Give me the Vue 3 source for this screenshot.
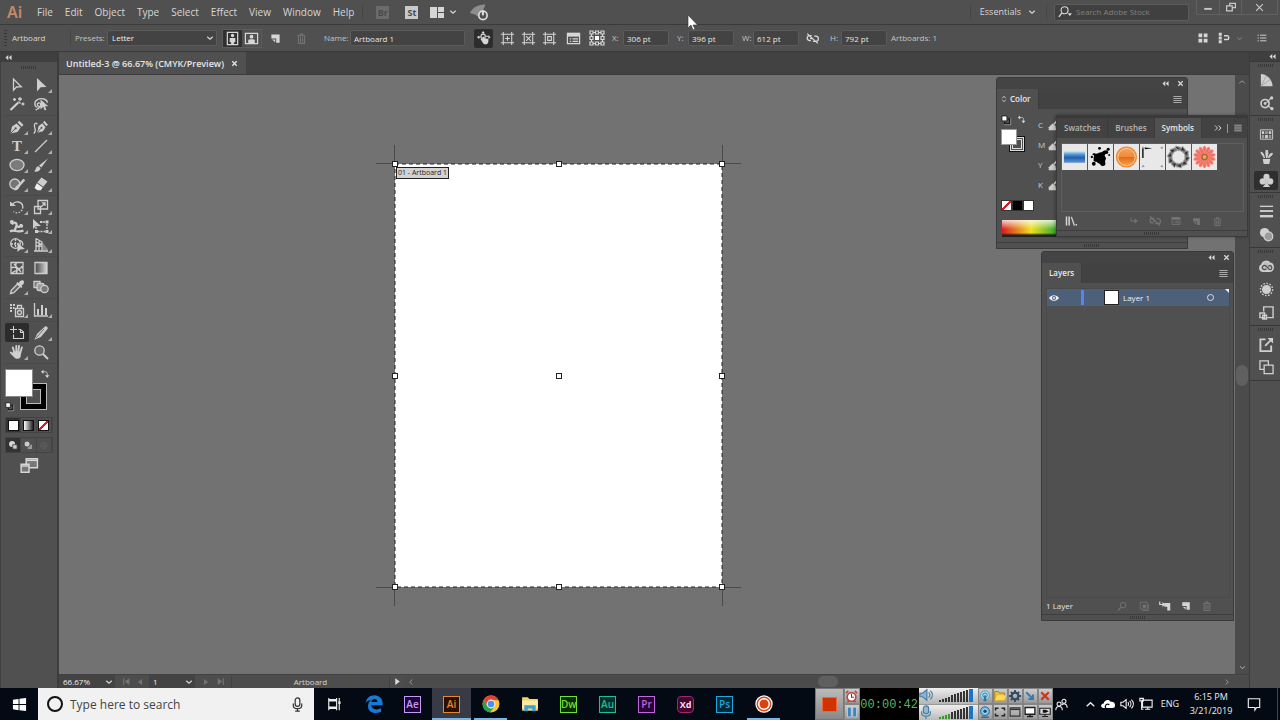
<script setup>
import { h } from 'vue'

const F = 'fill="currentColor" stroke="none"'
const nib = `<path ${F} d="M1.5 14.5 3 7.6 7.6 4.6l4 4L8.500 13z"/><path ${F} d="m8.600 3.600 1.700-1.800 4.200 4.200-1.800 1.700z"/><path stroke="#505050" stroke-width="1" d="m1.500 14.500 4.500-4.700"/><circle cx="6.700" cy="9.300" r="1.100" fill="#505050" stroke="none"/>`
const trash = `<path d="M3 4.500h10M6.500 4V2.500h3V4M4.200 5v9h7.600V5M6.700 6.500v6M9.300 6.500v6"/>`
const page = `<path ${F} d="M2 2h12v12H9V8H2z"/><path ${F} d="M3 9.500h4.500v4z"/>`
const icons = {
  select: `<path d="M4.500 2v11.200l3-3.200 4.700-.3z"/>`,
  direct: `<path ${F} d="M4 1v13.500l3.700-4.200 5.800-.4z"/>`,
  wand: `<path stroke-width="2.200" d="m1.500 14 7.800-7.500"/><path d="M11 1v4M9 3h4M14 6.500v3M12.500 8h3M5.500 2v3M4 3.500h3"/><path d="m9.500 5.500 2 2"/>`,
  lasso: `<path d="M4.500 11.500C1 10 .8 5.500 4.500 3.600c4-2 9.500-.6 10 3"/><path d="M6.500 10.500c-2.500 0-3-3-1-3.500s3 2 1.500 4-3 2-4.500 3"/><path ${F} d="M7.500 3.500v10l2.700-2.700 1.500 3.700 1.700-.7-1.500-3.500h3.400z"/>`,
  pen: nib,
  curve: `<g transform="translate(3 0) scale(.82 .95)">${nib}</g><path d="M.8 14.500C4.500 11 .5 8.500 1.500 5.500c.7-2 2.500-1.500 2.500 0"/>`,
  type: `<text x="8" y="13" text-anchor="middle" font-family="Liberation Serif, serif" font-weight="700" font-size="15" ${F}>T</text>`,
  line: `<path d="M2 14 14 2"/>`,
  ellipse: `<ellipse cx="8" cy="8" rx="7" ry="5.600" fill="#7b7b7b"/>`,
  brush: `<path ${F} d="M15 1.500 8.300 10.500 6 8.500z"/><path ${F} d="M5.400 9.200 7.600 11.200C7 14.300 4 15 1 14.500c2-1.200 1.500-4.800 4.400-5.300z"/>`,
  blob: `<circle cx="5.800" cy="8" r="5" fill="#747474"/><path stroke-width="2.600" d="M15.300 3.500 9 10.500"/><path ${F} d="m7.800 9.500 2.300 2.200c-1.600 2.500-3 2.800-5.400 2.500 1.500-1 1.400-3.700 3.100-4.700z"/>`,
  eraser: `<path ${F} d="m8.500 1.500 6 4-4.200 5.300-6-4.200z"/><path fill="#eee" stroke="none" d="m3.800 7.300 6 4.200-2 2.700H4.500L1.500 12z"/>`,
  rotate: `<path d="M3.500 5.500C6 1.300 13.500 2.200 13.800 8"/><path stroke-dasharray="1.500 1.500" d="M13.800 8c0 5-5.500 7.500-9.300 4.500"/><path ${F} d="M1 2.500 7 7H1z"/>`,
  scale: `<path d="M5 1.500h9.500V10H5zM1.500 7.500h6v7h-6zM8 8l4-4M8.800 3.800H12V7"/>`,
  warp: `<path stroke-width="2.200" d="M1 13.500c4-3 7 2 13.500-1M3 6.500c2-3 5-2 4.500 1S5 11 7 12M8 8c2 2 4 0 4-2"/><circle cx="2.800" cy="4" r="2" ${F}/><circle cx="12.500" cy="8" r="1.700" ${F}/>`,
  free: `<path stroke-dasharray="2 1" d="M7 4h7v9.500H3V9"/><path ${F} d="M0 1v10l2.800-2.700L8 8zM12.500 2.500h3v3h-3zM12.500 12h3v3h-3zM2 12h3v3H2zM7 3h2.500v2H7z"/>`,
  builder: `<circle cx="6.500" cy="6.500" r="4.800"/><path stroke-dasharray="2 1" d="M2 7h9M6.500 2v9"/><path d="M10 3.500c3 0 4.500 2.500 3.500 5"/><path ${F} d="M8.500 6v9l2.700-2.500 4.800-.5z"/>`,
  perspective: `<path d="M3 1.500v12.500M3 1.500 9 5v9M1 14h14M3 5l6 2.500M3 9h6M6 3v11"/><path fill="#888" stroke="none" d="m10 6 5.500 7H10z"/>`,
  mesh: `<path d="M2 2.500h12v11H2zM2 8c4-3 6 3 12-1M7.500 2.500c-3 4 3 7-.5 11M3 13c3-3 8-2 10-7M5 4l7 8"/>`,
  gradient: `<defs><linearGradient id="tg"><stop stop-color="#444"/><stop offset="1" stop-color="#d8d8d8"/></linearGradient></defs><path fill="url(#tg)" d="M2 2.500h12v11H2z"/>`,
  dropper: `<path fill="#666" d="m1.500 14.500.8-3.200L8.500 5l2.600 2.500-6.300 6.200z"/><path ${F} d="m7.300 4.300 1.200-1.200 1.200.9c1-2 3-3.500 4.800-2.200 1.600 1.700-.2 3.800-2 4.900l1 1.200-1.200 1.200z"/>`,
  blend: `<path d="M1 2.500h6v6H1z" fill="#777"/><rect x="4" y="4.500" width="7" height="7" rx="2" fill="#999"/><circle cx="11.500" cy="10" r="3.700" fill="#777"/>`,
  spray: `<path d="M6.500 6.500h8v8h-8zM8.500 6V3.500h4V6"/><circle cx="10.500" cy="10.500" r="2"/><path ${F} d="M1 2h2v2H1zM4 2h2v2H4zM1 5h2v2H1zM4 5h1.500v2H4zM1 8h2v2H1z"/>`,
  graph: `<path d="M1.500 1v13H15"/><path ${F} d="M4 7h2v6H4zM8 3h2v10H8zM12 6h2v7h-2z"/>`,
  artboard: `<path stroke-width="1.100" d="M4.500 1v7M1 4.500h7M4.500 9.500v4h10V7L11.500 4.500H9.500"/><path stroke-width="1.100" d="M11.500 5v2.500h3"/>`,
  slice: `<path ${F} d="m1.500 14.800 2.600-6L12 1.600c1.500-1 3.500 1 2.500 2.500l-6.700 8z"/><path stroke="#505050" stroke-width=".8" d="m3 13 8-9"/>`,
  hand: `<path stroke-width="1.900" stroke-linecap="round" d="M5.500 9 3.800 3.500M7.300 8V2M9.300 8l.7-6M11.300 8.500l1.600-5M5.500 12 1.800 8.500"/><path ${F} d="M4.500 7.500h7.800l-.6 5c-.8 3-5 3-6.500.7L2.500 10z"/>`,
  zoom: `<circle cx="6.500" cy="6.500" r="4.700" fill="#666"/><path stroke-width="2" d="m10 10 5 5"/>`,
  swap: `<path d="M5 4.500h3.500c2 0 3 1 3 3V11"/><path ${F} d="M5.500 1v7L1.500 4.500zM8 10h7l-3.500 4.500z"/>`,
  defaults: `<path fill="#fff" stroke="#111" d="M1.500 1.500h8v8h-8z"/><path stroke="#111" stroke-width="2" d="M11 6h3v8H6v-3"/><path stroke="#ddd" stroke-width=".8" d="M15.500 5v10.500H5"/>`,
  screens: `<path fill="#777" d="M5.500 1.500h10v8h-10z"/><path d="M5.500 3h10"/><path fill="#777" d="M1 6.500h7v7H1z"/><path d="M1 8h7"/>`,
  drawn: `<circle cx="6.500" cy="6.500" r="4.800" ${F}/><path fill="#ccc" stroke="#444" d="M7.500 7.500h7v7h-7z"/>`,
  behind: `<path fill="#999" stroke="none" d="M7.500 7.500h7v7h-7z"/><circle cx="6.500" cy="6.500" r="4.800" fill="#ccc" stroke="#444"/>`,
  inside: `<circle cx="8" cy="8" r="5.500"/><circle cx="8.500" cy="8.500" r="2"/>`,
  down: `<path stroke-width="2.400" d="m2.500 5.500 5.500 5 5.500-5"/>`,
  up: `<path stroke-width="2" d="m2.500 10.500 5.500-5 5.500 5"/>`,
  left: `<path stroke-width="2" d="M10.500 3 5.500 8l5 5"/>`,
  right: `<path stroke-width="2" d="m5.500 3 5 5-5 5"/>`,
  collapse: `<path ${F} d="M7.500 2v12L1 8zM15 2v12L8.500 8z"/>`,
  more: `<path stroke-width="2" d="m2 3 5 5-5 5M9 3l5 5-5 5"/>`,
  close: `<path stroke-width="3" d="m3 3 10 10M13 3 3 13"/>`,
  menu: `<path stroke-width="1.500" d="M2 3.500h12M2 6.500h12M2 9.500h12M2 12.500h12"/>`,
  layout: `<path ${F} d="M1 3h7v11H1zM9 3h6v5H9zM9 9h6v5H9z"/>`,
  rocket: `<path fill="#8d8d8d" stroke="none" d="M0 9C2 4 6 2 13.500 1 13 4 12 6 10 7.500L7 12l-3-2z"/><circle cx="11.500" cy="11" r="3.700" fill="#505050" stroke="#ddd" stroke-width="1.500"/><path stroke="#ddd" stroke-width="1.800" d="M11.500 6.500V11"/>`,
  search: `<circle cx="7.500" cy="6" r="4"/><path stroke-width="1.600" d="M4.500 9 1 13.500"/><path ${F} d="M11 9.500h5L13.500 12.500z"/>`,
  portrait: `<path d="M2.500 1.500h11v13h-11z"/><circle cx="8" cy="4.800" r="1.800" ${F}/><path ${F} d="M5 7.500h6V12H9.500v2h-3v-2H5z"/>`,
  landscape: `<path d="M1.500 2.500h13v11h-13z"/><circle cx="8" cy="6" r="2" ${F}/><path ${F} d="M4.500 13V9.500c0-1 7-1 7 0V13z"/>`,
  page, trash,
  move: `<circle cx="7" cy="6" r="2.500"/><path d="M7 1v2M1 7h3M10 6h4"/><path ${F} d="m7 0 2 2.500H5zM0 7l2.500-2v4zM15.500 7 13 5v4zM7 14l-3-5 1.200-.7 1.300 1.200V6.500H8V8l5 1v3.500L11.500 15H8z"/>`,
  abadd: `<path stroke-width="1.100" d="M3.500 1v14M12.500 1v14M1 3.500h14M1 12.500h14M8 5.500v5M5.500 8h5"/>`,
  abcross: `<path stroke-width="1.100" d="M3.500 1v14M12.500 1v14M1 3.500h14M1 12.500h14M5.500 5.500l5 5M10.500 5.500l-5 5"/>`,
  abbox: `<path stroke-width="1.100" d="M3.500 1v14M12.500 1v14M1 3.500h14M1 12.500h14M6 6h4v4H6z"/>`,
  options: `<path d="M1.500 2.500h13v11h-13z"/><path ${F} d="M1.500 2h13v4h-13z"/><path d="M4 8.500h1.500M7 8.500h6M4 11h1.500M7 11h6"/>`,
  refpoint: `<path stroke-width="1.200" d="M1 1h3v3H1zM6.500 1h3v3h-3zM12 1h3v3h-3zM1 6.500h3v3H1zM12 6.500h3v3h-3zM1 12h3v3H1zM6.500 12h3v3h-3zM12 12h3v3h-3zM4 2.500h2M10 2.500h2M4 13.500h2M10 13.500h2M2.500 4v2M2.500 10v2M13.500 4v2M13.500 10v2"/><path fill="#fff" stroke="none" d="M6 6h4v4H6z"/>`,
  unlink: `<path stroke-width="1.600" d="M7 4.500H4.500a3 3 0 0 0 0 6H6M10 5h2a3 3 0 0 1 0 6.500H8.500M5 8h3M1.500 2l13 12"/>`,
  grid: `<path ${F} d="M2 2h5v5H2zM9 2h5v5H9zM2 9h5v5H2zM9 9h5v5H9z"/>`,
  snap: `<path ${F} d="M1 1h4v4H1zM1 6h4v4H1zM1 11h4v4H1z"/><path stroke-width="2" d="M8 5h4.500c2.500 0 2.500 5 0 5H8"/>`,
  list: `<path stroke-width="1.500" d="M1 3.500h2M5 3.500h10M1 8h2M5 8h10M1 12.500h2M5 12.500h10"/>`,
  min: `<path stroke-width="3" d="M2 11h12"/>`,
  restore: `<path stroke-width="2" d="M6 5V2h9v7h-4M1 6h9v8H1z"/>`,
  x: `<path stroke-width="2" d="m2 2 12 12M14 2 2 14"/>`,
  quarter: `<path ${F} d="M2 1c7 .5 12 6 12.500 13H2z"/><path stroke="#999" stroke-width=".8" d="M2 14 12 7M2 14 8 3"/>`,
  nodes: `<circle cx="6.500" cy="8" r="4.300" stroke-width="1.800"/><circle cx="6.500" cy="8" r="1.500" ${F}/><path d="m8 7 5-5M9 10l5 4"/><circle cx="13.500" cy="2" r="1.700" ${F}/><circle cx="13.800" cy="13.500" r="1.700" ${F}/>`,
  swatches: `<path stroke-width="1" d="M1.500 3h13v10h-13z"/><path ${F} d="M3 4.500h2.500v3H3zM10.500 4.500H13v3h-2.500zM6.500 8.500h3V12h-3z"/><path fill="#999" stroke="none" d="M6.500 4.500h3v3h-3zM3 8.500h2.500V12H3zM10.500 8.500H13V12h-2.500z"/>`,
  brushes: `<path ${F} d="M4 9.500h8L11 15H5zM1.500 2C4 1.500 5.500 4 6.500 8.500H5C4.500 6 2 5 1.500 2zM7 0h2.500l.5 4-1 4.500H7.500L6.800 4zM14.500 3c1 3-2 3-3.500 5.500H9.500C10.500 5 12 3 14.500 3z"/>`,
  club: `<circle cx="8" cy="4.200" r="3.300" ${F}/><circle cx="4" cy="9" r="3.300" ${F}/><circle cx="12" cy="9" r="3.300" ${F}/><path ${F} d="M7 6h2l.5 6 2.500 3H4l2.500-3z"/>`,
  stroke: `<path stroke-width="1.500" d="M1 2.500h14"/><path stroke-width="2" d="M1 7.500h14"/><path stroke-width="2.600" d="M1 13h14"/>`,
  opacity: `<circle cx="6" cy="6" r="5" ${F}/><circle cx="10" cy="10" r="4.700" fill="#9b9b9b"/>`,
  cloud: `<path fill="#bdbdbd" stroke-width="1.700" d="M4.500 13C0 13 0 7.500 3 6.500 4 2 9.500 1.500 11.500 4.500c4.500 0 5 8 0 8.500z"/><path stroke="#505050" stroke-width="1.300" d="M8 10.500C6 12 3.500 11 3.500 9s2.500-3 4.500-1l3 3c2 1 3-1 2.500-2.500S11 6.500 10 8"/>`,
  sun: `<circle cx="8" cy="8" r="4.800" ${F}/><circle cx="8" cy="8" r="6.500" stroke-dasharray="1.700 1.600" stroke-width="1.500"/>`,
  styles: `<path stroke-width="1.500" d="M5 7V2h10v11.500H9M1 8.500h5v5H1zM4 11h4v4H4z"/>`,
  export: `<path stroke-width="2" d="M7 2.500H1.500V15H13V9"/><path stroke-width="2" d="m6.500 9.500 7-7"/><path ${F} d="M9 1h6v6z"/>`,
  artboards: `<path stroke-width="1.400" d="M5 10H1V1h9v4M5.500 5.500H15v9H5.500z"/>`,
  library: `<path stroke-width="2" d="M2 2v12M5.500 2v12"/><path stroke-width="1.700" d="m8.500 2.500 4 11.500"/><path ${F} d="M14 12h2v2h-2z"/>`,
  place: `<path stroke-width="1.600" d="M3 3v5h7"/><path ${F} d="M9 4v8l5-4z"/>`,
  eye: `<path ${F} d="M0 8c4-6 12-6 16 0-4 6-12 6-16 0z"/><circle cx="8" cy="8" r="3.200" fill="#4c6079" stroke="none"/><circle cx="8" cy="8" r="1.600" ${F}/>`,
  find: `<circle cx="9" cy="6" r="4"/><path stroke-width="1.800" d="m6 9-4.500 5"/>`,
  mask: `<path d="M2 2h11v11H2z"/><path ${F} d="M6 6h5v5H6z"/><path d="M5 15h10V5"/>`,
  sub: `<path ${F} d="M7 4h8v10h-4V9H7z"/><path stroke-width="1.600" d="M1 2v4h6M4.500 3.500 7 6 4.500 8.500"/>`,
  ink: `<path fill="#ccc" stroke="none" d="M1 15v-4l5-5 4 3 1 6z"/><path stroke="#ddd" stroke-width="2" d="m8 7 4-5"/>`,
  first: `<path stroke-width="2" d="M3 2v12"/><path ${F} d="M13 2v12L5 8z"/>`,
  prev: `<path ${F} d="M12 2v12L4 8z"/>`,
  next: `<path ${F} d="M4 2v12l8-6z"/>`,
  last: `<path stroke-width="2" d="M13 2v12"/><path ${F} d="M3 2v12l8-6z"/>`,
  windows: `<path ${F} d="m1 3 6-1v5.500H1zM8 1.800 15 1v6.500H8zM1 8.500h6V14l-6-1zM8 8.500h7V15l-7-.9z"/>`,
  mic: `<rect x="5.500" y="1" width="5" height="9" rx="2.500"/><path d="M3.500 7v2c0 4.500 9 4.500 9 0V7M8 12.500V15M5.500 15h5"/>`,
  taskview: `<path stroke-width="1.300" d="M2 4.500h9v7H2zM2 1v2h9V1M2 15v-2h9v2M14 1v14"/><path ${F} d="M13 5h2.500v3H13z"/>`,
  edge: `<path fill="#1679d3" stroke="none" d="M.5 7.200C1.300 2.700 4.500.3 8.300.3c4.600 0 7.400 3.200 7.400 7.300v1.600H5.600c.2 4 5.200 4.600 8.700 2.300v3.300c-5.400 2.700-12 .8-11.600-5.300.1-2.500 1.400-4.200 3.300-5C3.700 4.600 1.800 5.500.5 7.200zM5.700 6.300h5.400c0-3.600-5-3.500-5.400 0z"/>`,
  chrome: `<circle cx="8" cy="8" r="7.500" fill="#fbc52d" stroke="none"/><path fill="#df4436" stroke="none" d="M1.500 4.200A7.500 7.500 0 0 1 14.700 4.600L8 4.500 4.800 9.500z"/><path fill="#2b9e50" stroke="none" d="M1.500 4.200A7.500 7.500 0 0 0 7.300 15.500L11 10H5z"/><circle cx="8" cy="8" r="3.400" fill="#4c8df5" stroke="#eee" stroke-width="1"/>`,
  folder: `<path fill="#f3d36b" stroke="none" d="M1 2h5l1.500 1.500H15V14H1z"/><path fill="#ffe9a0" stroke="none" d="M1 5h14v7H1z"/><path fill="#36a0da" stroke="none" d="M3 14.500V9h10v5.500h-3V12H6v2.500z"/>`,
  record: `<circle cx="8" cy="8" r="7.700" fill="#fff" stroke="none"/><circle cx="8" cy="8" r="6" fill="#fff" stroke="#d94a22" stroke-width="1.300"/><circle cx="8" cy="8" r="4" fill="#d8440e" stroke="none"/>`,
  alarm: `<circle cx="8" cy="8.500" r="5.300" fill="#fff" stroke="#bf4540" stroke-width="2"/><path stroke="#bf4540" stroke-width="2" d="m1 4 3-3M15 4l-3-3M3 15l2-2M13 15l-2-2"/><path stroke="#444" d="M8 5v4h3"/>`,
  pause: `<path fill="#4384b8" stroke="#d6eaf5" stroke-width=".8" d="M2 1.500h5v13H2zM9 1.500h5v13H9z"/>`,
  sound: `<path fill="#8db4cf" stroke="#417da7" d="M1 6h3l5-4v12l-5-4H1z"/><path stroke="#417da7" d="M11 5c2 2 2 4 0 6M13 3c3 3 3 7 0 10"/>`,
  micblue: `<rect x="5" y="1" width="6" height="9" rx="3" fill="#94bad0" stroke="#417da7"/><path stroke="#417da7" d="M3 7v2c0 5 10 5 10 0V7M8 13v3"/>`,
  antenna: `<circle cx="8" cy="7" r="6" fill="#b6dbed" stroke="#4c9fcb"/><circle cx="8" cy="7" r="3" stroke="#2878a7"/><path fill="#2878a7" stroke="none" d="M7 7h2l1 8H6z"/>`,
  yfolder: `<path fill="#edbd35" stroke="#ac8523" d="M1 2h5l1 2h7v10H1z"/><path fill="#ffd85e" stroke="none" d="M4 7h12l-2 7H1z"/>`,
  gear: `<circle cx="8" cy="8" r="4.400" stroke="#304d60" stroke-width="3"/><path stroke="#304d60" stroke-width="2.500" d="M8 0v3M8 13v3M0 8h3M13 8h3M2.500 2.500l2 2M11.500 11.500l2 2M13.500 2.500l-2 2M4.500 11.500l-2 2"/>`,
  arrow: `<path stroke="#317bad" stroke-width="2.500" d="m3 3 9 9M12 6v6H6"/>`,
  redx: `<path stroke="#cf351d" stroke-width="3" d="m3 3 10 10M13 3 3 13"/>`,
  webcam: `<circle cx="8" cy="7" r="6" fill="#77b4d8" stroke="#276e9e"/><circle cx="8" cy="7" r="3" fill="#164b70" stroke="#b6ddef"/><path stroke="#276e9e" stroke-width="2" d="M3 15h10"/>`,
  fullscreen: `<path stroke="#252525" stroke-width="2" d="M2 6V3h4M10 3h4v3M14 10v3h-4M6 13H2v-3"/>`,
  window: `<path stroke="#333" stroke-width="1.500" d="M1.500 2.500h13v11h-13z"/><path stroke="#333" stroke-width="2" d="M2 4.500h12"/>`,
  monitor: `<path fill="#fff" stroke="#222" stroke-width="1.800" d="M1.500 2h13v9h-13z"/><path stroke="#222" stroke-width="2" d="M8 11v3M4 14h8"/>`,
  gamepad: `<path fill="#ddd" stroke="#222" stroke-width="1.500" d="M1 3h14v8H1zM8 11v3M4 14h8"/><path fill="#111" stroke="none" d="M5 5h4l4 2-4 2H5z"/>`,
  people: `<circle cx="11" cy="4" r="2.500"/><circle cx="5" cy="7.500" r="2.500"/><path d="M1 15c0-6 8-6 8 0M8 9c2-3 7-2 7 3"/>`,
  onedrive: `<path fill="#fff" stroke="none" d="M3 12.500c-4 0-3.500-5 0-5C4 3 9 2 11 5.500c4 0 5 1.500 5 4s-1 3-3 3z"/><path stroke="#050b14" d="M5.500 13c-2-4 2-6 4-4"/>`,
  speaker: `<path d="M1 6h2.500L7 3v10l-3.500-3H1zM9 6c1 1 1 3 0 4M11 4.500c2 2 2 5 0 7M13 3c3 3 3 7 0 10"/>`,
  network: `<path d="M4 3.500h11v8H4zM7 14h6M10 11.500V14M1 1.500h4v3H1zM3 5v9h2"/>`,
  notify: `<path d="M1.500 2h13v10H11l-2 3v-3H1.500z"/>`,
  sort: `<path stroke-width="1.500" d="m4.500 6.500 3.500-4 3.500 4M4.500 9.500l3.500 4 3.500-4"/>`
}
const Icon = ({ name, size = 16 }) => h('svg', {
  viewBox: '0 0 16 16', width: size, height: size, fill: 'none', stroke: 'currentColor',
  'stroke-width': 1.3, 'aria-hidden': 'true', innerHTML: icons[name]
})
Icon.props = ['name', 'size']

const menus = ['File', 'Edit', 'Object', 'Type', 'Select', 'Effect', 'View', 'Window', 'Help']
const plain = ['select', 'wand', 'lasso', 'mesh', 'gradient', 'blend', 'zoom', 'artboard']
const toolGroups = [
  ['select', 'direct', 'wand', 'lasso'],
  ['pen', 'curve', 'type', 'line', 'ellipse', 'brush', 'blob', 'eraser'],
  ['rotate', 'scale', 'warp', 'free', 'builder', 'perspective'],
  ['mesh', 'gradient', 'dropper', 'blend'],
  ['spray', 'graph'],
  ['artboard', 'slice', 'hand', 'zoom']
]
const dockGroups = [
  ['quarter', 'nodes'],
  ['swatches', 'brushes', 'club'],
  ['stroke', 'opacity'],
  ['cloud', 'sun', 'styles'],
  ['export', 'artboards']
]
const handles = ['nw', 'n', 'ne', 'w', 'c', 'e', 'sw', 's', 'se']
const apps = [
  { icon: 'edge', name: 'Edge' },
  { text: 'Ae', fg: '#c79bf5', bg: '#1c0638' },
  { text: 'Ai', fg: '#e8872b', bg: '#2b1000', active: true },
  { icon: 'chrome', name: 'Chrome', open: true },
  { icon: 'folder', name: 'File Explorer' },
  { text: 'Dw', fg: '#71df35', bg: '#072c06' },
  { text: 'Au', fg: '#20bd99', bg: '#03302b' },
  { text: 'Pr', fg: '#bf66df', bg: '#27042f' },
  { text: 'Xd', fg: '#ffd9f5', bg: '#41052c', edge: '#a02872', round: true },
  { text: 'Ps', fg: '#22a7d8', bg: '#032638' },
  { icon: 'record', name: 'Recorder', open: true }
]
const bars = [2, 3, 4, 5, 7, 8, 9, 10, 11, 12, 13]
const petals = Array.from({ length: 14 }, (_, i) => i * 360 / 14)
const ring = Array.from({ length: 10 }, (_, i) => i * 36)
const recIcons = ['antenna', 'yfolder', 'gear', 'arrow', 'redx', 'webcam', 'fullscreen', 'window', 'monitor', 'gamepad']
</script>

<template>
  <div class="screen">
    <header class="menubar">
      <div class="logo">Ai</div>
      <nav class="menus">
        <button v-for="m in menus" :key="m">{{ m }}</button>
      </nav>
      <i class="sep"></i>
      <button class="badge dim" aria-label="Bridge">Br</button>
      <button class="badge" aria-label="Stock">St</button>
      <button class="arrange" aria-label="Arrange documents"><Icon name="layout" :size="16" /><Icon name="down" :size="8" /></button>
      <button class="rocket" aria-label="GPU performance"><Icon name="rocket" :size="18" /></button>
      <span class="grow"></span>
      <i class="sep"></i>
      <button class="workspace">Essentials <Icon name="down" :size="8" /></button>
      <i class="sep"></i>
      <label class="stock"><Icon name="search" :size="14" /><input placeholder="Search Adobe Stock" aria-label="Search Adobe Stock" /></label>
      <div class="winbtns">
        <button aria-label="Minimize"><Icon name="min" :size="10" /></button>
        <button aria-label="Restore"><Icon name="restore" :size="10" /></button>
        <button aria-label="Close"><Icon name="x" :size="9" /></button>
      </div>
    </header>

    <section class="control">
      <i class="vgrip"></i>
      <span class="mode">Artboard</span>
      <label class="lbl preset" for="preset">Presets:</label>
      <span class="pick">
        <select id="preset"><option>Letter</option></select><Icon name="down" :size="8" />
      </span>
      <div class="orient">
        <button class="on" aria-label="Portrait"><Icon name="portrait" :size="15" /></button>
        <button aria-label="Landscape"><Icon name="landscape" :size="15" /></button>
      </div>
      <button class="ic w26" aria-label="New artboard"><Icon name="page" :size="11" /></button>
      <button class="ic w26 off" aria-label="Delete artboard"><Icon name="trash" :size="13" /></button>
      <label class="lbl name" for="abname">Name:</label>
      <input id="abname" class="field wide" value="Artboard 1" />
      <button class="ic movebtn" aria-label="Move artwork with artboard"><Icon name="move" :size="14" /></button>
      <button class="ic w21" aria-label="Show center mark"><Icon name="abadd" :size="15" /></button>
      <button class="ic w21" aria-label="Show cross hairs"><Icon name="abcross" :size="15" /></button>
      <button class="ic w21" aria-label="Show video safe areas"><Icon name="abbox" :size="15" /></button>
      <button class="ic w26" aria-label="Artboard options"><Icon name="options" :size="15" /></button>
      <button class="ic w21" aria-label="Reference point"><Icon name="refpoint" :size="16" /></button>
      <label class="lbl xy" for="fx">X:</label><input id="fx" class="field" value="306 pt" />
      <label class="lbl xy wider" for="fy">Y:</label><input id="fy" class="field" value="396 pt" />
      <label class="lbl xy wider" for="fw">W:</label><input id="fw" class="field" value="612 pt" />
      <button class="ic w26" aria-label="Constrain proportions"><Icon name="unlink" :size="13" /></button>
      <label class="lbl xy" for="fh">H:</label><input id="fh" class="field" value="792 pt" />
      <span class="count">Artboards: 1</span>
      <span class="grow"></span>
      <button class="ic w21" aria-label="Align to grid"><Icon name="grid" :size="12" /></button>
      <button class="ic w21" aria-label="Snap"><Icon name="snap" :size="12" /></button>
      <button class="ic off chev" aria-label="Snap options"><Icon name="down" :size="7" /></button>
      <button class="ic last" aria-label="Bar menu"><Icon name="list" :size="10" /></button>
    </section>

    <div class="work">
      <aside class="tools">
        <div class="strip"><Icon name="collapse" :size="7" /></div>
        <i class="grip"></i>
        <div v-for="(g, gi) in toolGroups" :key="gi" class="toolgroup">
          <button v-for="t in g" :key="t" class="tool" :class="{ on: t === 'artboard', more: !plain.includes(t) }" :aria-label="t">
            <Icon :name="t" :size="16" />
          </button>
        </div>
        <div class="paint">
          <button class="strokebox" aria-label="Stroke"></button>
          <button class="fillbox" aria-label="Fill"></button>
          <Icon class="swapic" name="swap" :size="10" />
          <Icon class="defic" name="defaults" :size="9" />
        </div>
        <div class="modes">
          <button class="on" aria-label="Color"><i class="chip"></i></button>
          <button aria-label="Gradient"><i class="chip grad"></i></button>
          <button aria-label="None"><i class="chip none"></i></button>
        </div>
        <div class="modes second">
          <button class="on" aria-label="Draw normal"><Icon name="drawn" :size="10" /></button>
          <button aria-label="Draw behind"><Icon name="behind" :size="10" /></button>
          <button class="off" aria-label="Draw inside"><Icon name="inside" :size="9" /></button>
        </div>
        <button class="screenmode" aria-label="Screen mode"><Icon name="screens" :size="18" /></button>
      </aside>

      <main class="doc">
        <div class="tabs">
          <div class="tab">Untitled-3 @ 66.67% (CMYK/Preview)<button aria-label="Close tab"><Icon name="close" :size="7" /></button></div>
        </div>
        <div class="viewport">
          <div class="canvas">
            <div class="artboard">
              <i v-for="c in ['tl', 'tr', 'bl', 'br']" :key="c" class="crop" :class="c"></i>
              <svg class="edge" width="100%" height="100%"><rect width="100%" height="100%" /></svg>
              <span class="abname">01 - Artboard 1</span>
              <i v-for="p in handles" :key="p" class="handle" :class="p"></i>
            </div>
          </div>
          <div class="vscroll">
            <Icon name="up" :size="8" />
            <i class="thumb"></i>
            <Icon name="down" :size="7" />
          </div>
        </div>
        <footer class="status">
          <span class="pick zoomsel"><select aria-label="Zoom"><option>66.67%</option></select><Icon name="down" :size="8" /></span>
          <button class="nav off start-nav" aria-label="First"><Icon name="first" :size="9" /></button>
          <button class="nav off" aria-label="Previous"><Icon name="prev" :size="8" /></button>
          <span class="pick pagesel"><select aria-label="Artboard number"><option>1</option></select><Icon name="down" :size="8" /></span>
          <button class="nav off start-nav" aria-label="Next"><Icon name="next" :size="8" /></button>
          <button class="nav off" aria-label="Last"><Icon name="last" :size="9" /></button>
          <span class="info">Artboard</span>
          <button class="nav play" aria-label="Status menu"><Icon name="next" :size="9" /></button>
          <div class="hscroll">
            <Icon name="left" :size="8" />
            <i class="thumb"></i>
            <Icon name="right" :size="8" />
          </div>
        </footer>

        <section class="panel color">
          <div class="ptop"><Icon name="collapse" :size="7" /><Icon name="close" :size="7" /></div>
          <div class="ptabs">
            <button class="on"><Icon name="sort" :size="8" /> Color</button>
            <Icon class="pmenu" name="menu" :size="11" />
          </div>
          <div class="colorbody">
            <div class="proxy">
              <div class="row"><Icon name="defaults" :size="10" /><Icon name="swap" :size="9" /></div>
              <div class="mini"><i class="ministroke"></i><i class="minifill"></i></div>
            </div>
            <div class="cmyk">
              <label v-for="c in ['C', 'M', 'Y', 'K']" :key="c"><span>{{ c }}</span><Icon name="ink" :size="12" /></label>
            </div>
          </div>
          <div class="trio"><i class="none"></i><i class="black"></i><i></i></div>
          <div class="spectrum"></div>
          <div class="foot"><i class="grip"></i></div>
        </section>

        <section class="panel layers">
          <div class="ptop"><Icon name="collapse" :size="7" /><Icon name="close" :size="7" /></div>
          <div class="ptabs">
            <button class="on">Layers</button>
            <Icon class="pmenu" name="menu" :size="11" />
          </div>
          <div class="layerlist">
            <div class="layer">
              <Icon name="eye" :size="10" />
              <i class="tint"></i>
              <i class="thumbnail"></i>
              <span>Layer 1</span>
              <i class="target"></i>
            </div>
          </div>
          <div class="layerbar">
            <span>1 Layer</span>
            <button class="off" aria-label="Locate"><Icon name="find" :size="11" /></button>
            <button class="off" aria-label="Mask"><Icon name="mask" :size="10" /></button>
            <button aria-label="New sublayer"><Icon name="sub" :size="12" /></button>
            <button aria-label="New layer"><Icon name="page" :size="10" /></button>
            <button class="off" aria-label="Delete"><Icon name="trash" :size="12" /></button>
          </div>
          <div class="foot"><i class="grip"></i></div>
        </section>

        <section class="panel symbols">
          <div class="ptabs">
            <button>Swatches</button><button>Brushes</button><button class="on">Symbols</button>
            <Icon class="pmore" name="more" :size="8" />
            <i class="bar"></i>
            <Icon class="pmenu" name="menu" :size="10" />
          </div>
          <div class="symlist">
            <svg viewBox="0 0 26 26"><defs><linearGradient id="sb" x2="0" y2="1"><stop stop-color="#bde8f7" /><stop offset=".3" stop-color="#4c93cf" /><stop offset=".55" stop-color="#265eae" /><stop offset="1" stop-color="#5f97d5" /></linearGradient></defs><rect x="2" y="7" width="22" height="12" fill="url(#sb)" /></svg>
            <svg viewBox="0 0 26 26"><path d="M7 9c3 2 3-1 7-1 2 0 2-3 5-1 1 3-3 3-1 6 2 2-1 3 0 6s-3 5-5 2c-1-2-3-1-4-3-2 0-4-1-3-3-1-1 1-2 0-4-2 0-2-2 1-2z" /><circle cx="12" cy="4" r="1.500" /><circle cx="21" cy="5" r="1.600" /><circle cx="4" cy="13" r="1.200" /><circle cx="6" cy="20" r="2" /><circle cx="22" cy="11" r="1" /><circle cx="19" cy="8" r="2" /></svg>
            <svg viewBox="0 0 26 26"><defs><linearGradient id="so" x2="0" y2="1"><stop stop-color="#f6a55c" /><stop offset=".48" stop-color="#ee8a3a" /><stop offset=".5" stop-color="#e06a18" /><stop offset="1" stop-color="#f6a04c" /></linearGradient></defs><circle cx="13" cy="13" r="11" fill="#ee8936" /><circle cx="13" cy="13" r="9" fill="url(#so)" stroke="#fbcf9c" /></svg>
            <svg viewBox="0 0 26 26"><path d="M3 14V4" stroke="#111" stroke-width="1.500" /><path d="M5 3 13 4 5 5z" /><g fill="#8e8e9d"><path d="m2 2 3 1-2 2zM24 2l-3 1 2 2zM2 24l3-1-2-2zM24 24l-3-1 2-2z" /></g></svg>
            <svg viewBox="0 0 26 26"><g v-for="a in ring" :key="a" :transform="`rotate(${a} 13 13)`"><path d="M10 1.500 16 3l1 4-6-1z" fill="#777" stroke="#aaa" stroke-width=".8" /><path d="m10 2 1 4 3-2z" fill="#333" /></g></svg>
            <svg viewBox="0 0 26 26"><ellipse v-for="a in petals" :key="a" cx="13" cy="6.500" rx="2" ry="5" fill="#ef7165" stroke="#f9a196" stroke-width=".5" :transform="`rotate(${a} 13 13)`" /><circle cx="13" cy="13" r="3.500" fill="#a9682f" /><circle cx="13" cy="13" r="2" fill="#dfad58" /></svg>
          </div>
          <div class="symbar">
            <button class="lib" aria-label="Libraries"><Icon name="library" :size="12" /></button>
            <button class="off" aria-label="Place"><Icon name="place" :size="10" /></button>
            <button class="off" aria-label="Break link"><Icon name="unlink" :size="12" /></button>
            <button class="off" aria-label="Options"><Icon name="options" :size="10" /></button>
            <button class="off" aria-label="New"><Icon name="page" :size="9" /></button>
            <button class="off" aria-label="Delete"><Icon name="trash" :size="11" /></button>
          </div>
          <div class="foot"><i class="grip"></i></div>
        </section>
      </main>

      <aside class="dock">
        <div class="strip"><Icon name="collapse" :size="7" /></div>
        <div v-for="(g, gi) in dockGroups" :key="gi" class="dockgroup">
          <i class="grip"></i>
          <button v-for="d in g" :key="d" :class="{ on: d === 'club' }" :aria-label="d"><Icon :name="d" :size="15" /></button>
        </div>
      </aside>
    </div>

    <footer class="taskbar">
      <button class="start" aria-label="Start"><Icon name="windows" :size="15" /></button>
      <label class="find"><i class="cortana"></i><input placeholder="Type here to search" aria-label="Type here to search" /><Icon name="mic" :size="15" /></label>
      <button class="app tv" aria-label="Task view"><Icon name="taskview" :size="14" /></button>
      <button v-for="a in apps" :key="a.text || a.icon" class="app" :class="{ active: a.active, open: a.open }" :aria-label="a.name || a.text">
        <Icon v-if="a.icon" :name="a.icon" :size="18" />
        <span v-else class="adobe" :class="{ round: a.round }" :style="{ color: a.fg, background: a.bg, borderColor: a.edge || a.fg }">{{ a.text }}</span>
      </button>
      <span class="grow"></span>
      <div class="recorder">
        <button class="stop" aria-label="Stop"><i></i></button>
        <div class="pair"><button aria-label="Schedule"><Icon name="alarm" :size="13" /></button><button aria-label="Pause"><Icon name="pause" :size="12" /></button></div>
        <div class="timer">00:00:42</div>
        <div class="levels">
          <div v-for="s in ['sound', 'micblue']" :key="s" class="level" :class="s">
            <Icon :name="s" :size="14" />
            <i v-for="(b, i) in bars" :key="i" :style="{ height: b + 'px' }"></i>
          </div>
        </div>
        <div class="recgrid"><button v-for="r in recIcons" :key="r" :aria-label="r"><Icon :name="r" :size="12" /></button></div>
      </div>
      <div class="tray">
        <Icon class="people" name="people" :size="13" />
        <Icon name="up" :size="11" />
        <Icon name="onedrive" :size="14" />
        <Icon name="speaker" :size="14" />
        <Icon name="network" :size="14" />
        <span class="lang">ENG</span>
        <div class="clock"><span>6:15 PM</span><span>3/21/2019</span></div>
        <Icon class="note" name="notify" :size="14" />
        <i class="peek"></i>
      </div>
    </footer>

    <svg class="cursor" width="12" height="18" viewBox="0 0 12 18"><path d="M1 1v13l3-3 2 5 2-1-2-4h4.500z" fill="#fff" stroke="#333" stroke-width=".6" /></svg>
  </div>
</template>

<style>
html, body { margin: 0; background: #505050; overflow: hidden; }
</style>

<style scoped>
.screen { position: relative; display: flex; flex-direction: column; height: 100vh; overflow: hidden; background: #505050; color: #d6d6d6; font: 8px/12px "Open Sans", "Noto Sans", sans-serif; }
.screen * { box-sizing: border-box; }
button { padding: 0; border: 0; background: none; color: inherit; font: inherit; display: flex; align-items: center; justify-content: center; white-space: nowrap; }
input, select { min-width: 0; border: 0; background: none; color: inherit; font: inherit; outline: 0; border-radius: 0; appearance: none; padding: 0; }
svg { display: block; flex: none; overflow: visible; }
i { display: block; flex: none; }
.grow { flex: 1; }
.off { color: #757575; }

.menubar { flex: none; display: flex; align-items: center; height: 25px; border-bottom: 1px solid #3b3b3b; }
.logo { width: 31px; padding-left: 7px; color: #c38a66; font: 600 16px/22px "Noto Sans", sans-serif; }
.menus { display: flex; font-size: 10px; margin-right: 2px; }
.menus button { padding: 0 6px; height: 24px; }
.sep { width: 1px; height: 14px; background: #454545; }
.badge { width: 13px; height: 13px; margin-left: 13px; background: #c9c9c9; color: #4a4a4a; font: 700 9px/13px "Open Sans", sans-serif; }
.badge + .badge { margin-left: 16px; }
.badge.dim { background: #6b6b6b; color: #4b4b4b; }
.arrange { gap: 4px; margin-left: 11px; }
.rocket { margin-left: 13px; }
.workspace { gap: 7px; padding: 0 10px 0 9px; font-size: 9px; }
.stock { display: flex; align-items: center; gap: 4px; width: 135px; height: 17px; margin: 0 7px; padding-left: 3px; background: #404040; border: 1px solid #5c5c5c; border-radius: 2px; }
.stock input { flex: 1; font-size: 8px; }
.stock input::placeholder { color: #808080; opacity: 1; }
.winbtns { display: flex; align-self: flex-start; margin-right: 2px; border: 1px solid #606060; border-top: 0; }
.winbtns button { width: 22px; height: 14px; color: #c9c9c9; }
.winbtns button + button { border-left: 1px solid #606060; }
.winbtns button:last-child { width: 36px; }

.control { flex: none; display: flex; align-items: center; height: 27px; border-bottom: 1px solid #3b3b3b; }
.vgrip { width: 3px; height: 17px; margin-left: 4px; background: repeating-linear-gradient(#383838 0 1px, transparent 1px 3px); }
.mode { width: 59px; margin-left: 5px; border-right: 1px solid #474747; line-height: 16px; }
.lbl { color: #c4c4c4; white-space: nowrap; }
.preset { width: 32px; margin-left: 4px; }
.pick { position: relative; display: flex; align-items: center; width: 110px; height: 16px; background: #434343; border: 1px solid #5b5b5b; border-radius: 2px; }
.pick select { width: 100%; height: 14px; padding-left: 4px; color: #eee; }
.pick svg { position: absolute; right: 2px; pointer-events: none; }
.orient { display: flex; margin-left: 5px; border: 1px solid #5c5c5c; }
.orient button { width: 19px; height: 17px; }
.orient .on { background: #303030; }
.ic { flex: none; height: 18px; }
.w26 { width: 26px; }
.w21 { width: 21px; }
.name { width: 26px; margin-left: 10px; }
.field { flex: none; width: 46px; height: 16px; padding-left: 3px; background: #434343; border: 1px solid #5b5b5b; border-radius: 2px; color: #e6e6e6; }
.field.wide { width: 115px; }
.movebtn { width: 19px; height: 19px; margin: 0 4px 0 9px; background: #2d2d2d; border-radius: 2px; }
.xy { width: 11px; margin-left: 5px; }
.xy.wider { width: 11px; margin-left: 8px; }
.count { margin-left: 4px; color: #c4c4c4; }
.chev { width: 10px; }
.last { width: 36px; }

.work { flex: 1; min-height: 0; display: flex; background: #424242; }
.strip { height: 10px; background: #3f3f3f; display: flex; align-items: center; padding-left: 4px; }
.grip { width: 16px; height: 3px; background: repeating-linear-gradient(90deg, #393939 0 1px, transparent 1px 2px); }
.tools { flex: none; display: flex; flex-direction: column; width: 58px; background: #505050; border-left: 1px solid #404040; border-right: 1px solid #3c3c3c; }
.tools > .grip { margin: 4px auto 6px; }
.toolgroup { display: grid; grid-template-columns: 24px 24px; margin-left: 4px; padding-bottom: 2px; margin-bottom: 1px; border-bottom: 1px solid #4a4a4a; }
.tool { position: relative; height: 19px; color: #cecece; }
.tool.on { background: #2c2c2c; border-radius: 2px; }
.tool.more::after { content: ""; position: absolute; right: 1px; bottom: 1px; border: 2px solid transparent; border-right-color: #b0b0b0; border-bottom-color: #b0b0b0; }
.paint { position: relative; height: 46px; margin: 3px 0 3px 3px; }
.fillbox { position: absolute; left: 1px; top: 1px; width: 28px; height: 28px; background: #fff; border: 1px solid #888; }
.strokebox { position: absolute; left: 16px; top: 15px; width: 27px; height: 27px; background: #000; border: 1px solid #bbb; }
.strokebox::after { content: ""; width: 13px; height: 13px; background: #505050; border: 1px solid #bbb; }
.swapic { position: absolute; left: 36px; top: 1px; }
.defic { position: absolute; left: 1px; top: 34px; }
.modes { display: flex; margin-left: 4px; border: 1px solid #444; width: 48px; }
.modes button { flex: 1; height: 14px; border-right: 1px solid #444; }
.modes .on { background: #333; }
.modes.second { margin-top: 4px; }
.modes .off { color: #656565; }
.chip { width: 11px; height: 11px; background: #fff; border: 1px solid #111; }
.chip.grad { background: linear-gradient(90deg, #fff, #222); }
.none, .chip.none { background: linear-gradient(135deg, #fff 42%, #d91c22 43% 57%, #fff 58%); }
.screenmode { height: 20px; margin-top: 3px; }

.doc { position: relative; flex: 1; min-width: 0; display: flex; flex-direction: column; border-left: 1px solid #3c3c3c; }
.tabs { flex: none; height: 23px; display: flex; background: #424242; border-bottom: 1px solid #3d3d3d; }
.tab { display: flex; align-items: center; gap: 7px; padding: 1px 8px 0 7px; background: #505050; color: #e6e6e6; font-size: 9px; font-weight: 600; }
.viewport { flex: 1; min-height: 0; display: flex; }
.canvas { flex: 1; position: relative; background: #727272; overflow: hidden; }
.artboard { position: absolute; left: 336px; top: 89px; width: 327px; height: 423px; background: #fff; }
.edge { position: absolute; inset: 0; overflow: visible; }
.edge rect { fill: none; stroke: #222; stroke-dasharray: 4 3; stroke-width: 1; }
.handle { position: absolute; width: 6px; height: 6px; margin: -3px; background: #fff; border: 1px solid #222; left: 50%; top: 50%; }
.nw, .n, .ne { top: 0; }
.sw, .s, .se { top: 100%; }
.nw, .w, .sw { left: 0; }
.ne, .e, .se { left: 100%; }
.abname { position: absolute; left: 1px; top: 3px; padding: 0 1px; background: #d2d2d2; border: 1px solid #222; color: #222; font: 7px/10px "Open Sans", sans-serif; white-space: nowrap; }
.crop { position: absolute; width: 19px; height: 19px; }
.crop.tl { right: 100%; bottom: 100%; border-right: 1px solid #4a4a4a; border-bottom: 1px solid #4a4a4a; }
.crop.tr { left: 100%; bottom: 100%; border-left: 1px solid #4a4a4a; border-bottom: 1px solid #4a4a4a; }
.crop.bl { right: 100%; top: 100%; border-right: 1px solid #4a4a4a; border-top: 1px solid #4a4a4a; }
.crop.br { left: 100%; top: 100%; border-left: 1px solid #4a4a4a; border-top: 1px solid #4a4a4a; }
.vscroll { flex: none; width: 14px; display: flex; flex-direction: column; align-items: center; justify-content: space-between; padding: 3px 0; background: #4b4b4b; color: #999; }
.vscroll .thumb { width: 12px; height: 21px; border-radius: 6px; background: #606060; }
.status { flex: none; height: 14px; display: flex; align-items: center; background: #4d4d4d; border-top: 1px solid #424242; }
.status .pick { height: 13px; border: 0; border-radius: 0; }
.status select { height: 13px; line-height: 13px; }
.zoomsel { width: 56px; }
.pagesel { width: 46px; margin-left: 2px; }
.nav { width: 14px; }
.start-nav { margin-left: 4px; }
.info { width: 159px; margin-left: 4px; text-align: center; border-left: 1px solid #424242; border-right: 1px solid #424242; }
.play { color: #ddd; }
.hscroll { flex: 1; display: flex; align-items: center; justify-content: space-between; padding: 0 18px 0 3px; color: #999; background: #4b4b4b; }
.hscroll .thumb { width: 20px; height: 11px; margin-left: 18px; border-radius: 6px; background: #5f5f5f; }

.panel { position: absolute; display: flex; flex-direction: column; background: #505050; border: 1px solid #3a3a3a; }
.ptop { flex: none; height: 11px; display: flex; align-items: center; justify-content: flex-end; gap: 8px; padding-right: 3px; background: #444; }
.ptabs { flex: none; display: flex; align-items: center; height: 20px; background: #424242; }
.ptabs button { height: 20px; padding: 0 7px; color: #b5b5b5; font-weight: 600; gap: 2px; border-right: 1px solid #3c3c3c; }
.ptabs .on { background: #505050; color: #e9e9e9; }
.pmenu { margin-left: auto; margin-right: 4px; color: #aaa; }
.foot { flex: none; height: 6px; display: flex; align-items: center; justify-content: center; border-top: 1px solid #3d3d3d; }
.color { right: 61px; top: 25px; width: 192px; height: 172px; border-radius: 3px 3px 0 0; }
.color .ptabs button { padding: 0 7px 0 3px; }
.colorbody { display: flex; flex: 1; padding: 6px 0 0 4px; }
.proxy { width: 37px; }
.proxy .row { display: flex; gap: 6px; }
.mini { position: relative; height: 24px; margin-top: 3px; }
.minifill { position: absolute; left: 0; top: 1px; width: 16px; height: 16px; background: #fff; border: 1px solid #999; }
.ministroke { position: absolute; left: 9px; top: 9px; width: 14px; height: 14px; background: #505050; border: 3px double #ddd; outline: 1px solid #111; }
.cmyk { display: flex; flex-direction: column; }
.cmyk label { display: flex; align-items: center; height: 20px; color: #ccc; }
.cmyk span { width: 10px; }
.trio { display: flex; margin: 0 0 9px 4px; }
.trio i { width: 11px; height: 11px; background: #fff; border: 1px solid #333; }
.trio .black { background: #000; }
.trio .none { background: linear-gradient(135deg, #fff 42%, #d91c22 43% 57%, #fff 58%); }
.spectrum { height: 17px; margin: 0 14px 5px 5px; background: linear-gradient(rgba(255,255,255,.8), transparent 55%, transparent 75%, #222 90%), linear-gradient(90deg, #dc1c1c, #f0e020 17%, #24a52d 33%, #00aac8 50%, #1733b4 66%, #b600a5 83%, #d30000); }
.layers { right: 15px; top: 199px; width: 193px; height: 370px; border-radius: 3px 3px 0 0; }
.layerlist { flex: 1; margin: 5px 3px 0 4px; border: 1px solid #4a4a4a; background: #505050; }
.layer { position: relative; display: flex; align-items: center; height: 17px; padding-left: 2px; background: #4c6079; color: #f0f0f0; }
.layer::after { content: ""; position: absolute; right: 0; top: 0; border: 2px solid transparent; border-top-color: #eee; border-right-color: #eee; }
.tint { width: 3px; height: 15px; margin: 0 20px 0 22px; background: #5585f0; }
.thumbnail { width: 15px; height: 15px; margin-right: 4px; background: #fff; border: 1px solid #222; }
.layer span { flex: 1; }
.target { width: 7px; height: 7px; margin-right: 15px; border: 1px solid #ddd; border-radius: 50%; }
.layerbar { display: flex; align-items: center; height: 16px; padding: 0 16px 0 4px; }
.layerbar span { flex: 1; color: #e2e2e2; }
.layerbar button { width: 21px; }
.symbols { right: 1px; top: 63px; width: 192px; height: 122px; border-top-width: 3px; box-shadow: -1px 0 3px rgba(0,0,0,.3); }
.pmore { margin-left: auto; }
.bar { width: 1px; height: 9px; margin: 0 5px; background: #999; }
.symbols .pmenu { margin-left: 0; }
.symlist { flex: 1; display: flex; margin: 5px 3px 0 4px; border: 1px solid #5e5e5e; }
.symlist svg { width: 26px; height: 26px; background: #e8e8e8; border-right: 1px solid #555; overflow: hidden; }
.symbar { display: flex; align-items: center; height: 18px; padding: 0 19px 0 4px; }
.symbar button { width: 21px; }
.symbar .lib { width: 20px; margin-right: auto; }

.dock { flex: none; width: 31px; background: #505050; border-left: 1px solid #3c3c3c; }
.dock .strip { justify-content: flex-end; padding-right: 4px; border-bottom: 1px solid #383838; }
.dockgroup { padding: 2px 0 0 2px; border-bottom: 1px solid #383838; }
.dockgroup:nth-child(n+4) { padding-bottom: 1px; }
.dockgroup .grip { margin: 0 auto 2px; }
.dockgroup button { width: 24px; height: 23px; margin: 0 auto; color: #cfcfcf; }
.dockgroup button.on { height: 19px; margin: 2px auto; background: #2f2f2f; border-radius: 2px; }

.taskbar { flex: none; display: flex; height: 32px; background: #040a14; color: #eee; }
.start { width: 38px; color: #fff; }
.find { display: flex; align-items: center; width: 276px; padding: 0 9px; background: #f1f1f1; color: #333; }
.cortana { width: 16px; height: 16px; border: 2px solid #111; border-radius: 50%; margin-right: 7px; }
.find input { flex: 1; font-size: 12px; }
.find input::placeholder { color: #444; opacity: 1; }
.app { position: relative; flex: none; width: 39px; }
.tv { width: 40px; }
.app.active { background: #383b45; }
.app.active::after, .app.open::after { content: ""; position: absolute; left: 3px; right: 3px; bottom: 0; height: 2px; background: #75b5e8; }
.app.active::after { left: 0; right: 0; }
.adobe { width: 17px; height: 17px; border: 1px solid; font: 600 10px/15px "Open Sans", sans-serif; text-align: center; }
.adobe.round { border-radius: 4px; font-weight: 700; font-size: 9px; }
.recorder { flex: none; display: flex; background: #a9a9a9; }
.stop { width: 29px; background: linear-gradient(#bbb, #888); border: 1px solid #777; }
.stop i { width: 15px; height: 15px; background: #d13300; border: 1px solid #eb6a3a; }
.pair { width: 16px; display: grid; grid-template-rows: 1fr 1fr; }
.pair button, .recgrid button { background: linear-gradient(#ccc, #999); border: 1px solid #858585; }
.timer { width: 59px; background: #000; color: #58b765; text-align: center; font: 12px/34px "Liberation Mono", monospace; }
.levels { width: 59px; display: grid; grid-template-rows: 1fr 1fr; }
.level { display: flex; align-items: flex-end; gap: 1px; padding: 0 2px 2px 0; background: linear-gradient(#eee, #b5b5b5); border: 1px solid #999; border-width: 0 0 1px; }
.level svg { margin-right: 5px; }
.level i { width: 2px; background: #333; }
.level i:last-child { width: 4px; background: #1976c4; }
.level.micblue i:nth-of-type(-n+4) { background: #3a9a25; }
.recgrid { display: grid; grid-template-columns: repeat(5, 15px); grid-template-rows: 1fr 1fr; }
.tray { flex: none; display: flex; align-items: center; gap: 5px; padding-left: 2px; font-size: 9px; }
.people { margin-right: 12px; }
.lang { margin-left: 3px; }
.clock { width: 46px; display: flex; flex-direction: column; text-align: center; line-height: 14px; margin-left: 4px; }
.note { margin-left: 8px; }
.peek { width: 1px; height: 32px; margin: 0 2px 0 11px; background: #444; }
.cursor { position: absolute; left: 687px; top: 14px; }
</style>
